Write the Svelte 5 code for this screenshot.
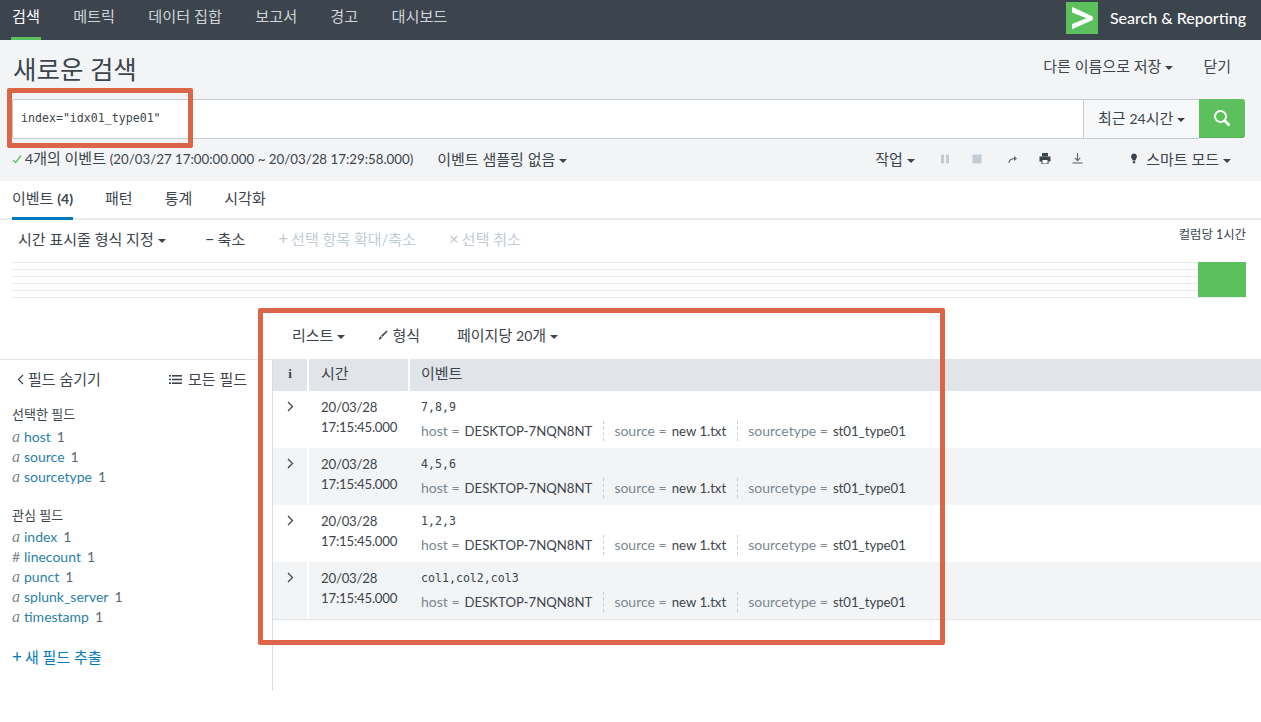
<script>
  const navItems = ['검색', '메트릭', '데이터 집합', '보고서', '경고', '대시보드'];
  const events = ['7,8,9', '4,5,6', '1,2,3', 'col1,col2,col3'];
  const selected = [['a', 'host'], ['a', 'source'], ['a', 'sourcetype']];
  const interesting = [['a', 'index'], ['#', 'linecount'], ['a', 'punct'], ['a', 'splunk_server'], ['a', 'timestamp']];
  const tabs = ['패턴', '통계', '시각화'];
</script>

<div class="page">
  <nav class="nav">
    {#each navItems as item, i}
      <span class="nav-item" class:active={i === 0}>{item}</span>
    {/each}
    <div class="brand">
      <span class="logo">
        <svg width="32" height="32" viewBox="0 0 32 32"><path d="M6 4.7 L26.7 14.5 V18 L6 27.3 V22 L20.5 16.2 L6 10.5 Z" fill="#fff"/></svg>
      </span>
      <span class="brand-text">Search &amp; Reporting</span>
    </div>
  </nav>

  <section class="head">
    <div class="title-row">
      <h1>새로운 검색</h1>
      <div class="title-actions">
        <span class="act">다른 이름으로 저장<i class="caret"></i></span>
        <span class="act close">닫기</span>
      </div>
    </div>
    <div class="search-row">
      <div class="search-input">index="idx01_type01"</div>
      <div class="time-btn">최근 <span class="lat">24</span>시간<i class="caret"></i></div>
      <div class="go-btn">
        <svg width="18" height="18" viewBox="0 0 18 18" fill="none" stroke="#fff"><circle cx="7.5" cy="7.5" r="5.5" stroke-width="2"/><path d="M11.5 11.5 L16.5 16.5" stroke-width="2.6"/></svg>
      </div>
    </div>
    <div class="status-row">
      <svg class="check" width="10" height="10" viewBox="0 0 10 10" fill="none" stroke="#5cc05c" stroke-width="1.3"><path d="M1 6 L3.6 8.6 L9 1.5"/></svg>
      <span class="count"><span class="lat">4</span>개의 이벤트 <span class="dates">(20/03/27 17:00:00.000 ~ 20/03/28 17:29:58.000)</span></span>
      <span class="sampling">이벤트 샘플링 없음<i class="caret"></i></span>
      <div class="job">
        <span class="job-menu">작업<i class="caret"></i></span>
        <span class="ico">
          <svg width="10" height="10" viewBox="0 0 10 10" fill="#c3cbd4"><rect x="1" y="0.5" width="3" height="9"/><rect x="6" y="0.5" width="3" height="9"/></svg>
        </span>
        <span class="ico">
          <svg width="10" height="10" viewBox="0 0 10 10" fill="#c3cbd4"><rect x="0.5" y="0.5" width="9" height="9"/></svg>
        </span>
        <span class="ico share">
          <svg width="10" height="10" viewBox="0 0 10 10" fill="none" stroke="#5c6773" stroke-width="1.1"><path d="M1 9 C1 5.5 3.5 4.5 8 4.5"/><path d="M6 2 L9 4.5 L6 7 Z" fill="#5c6773" stroke="none"/></svg>
        </span>
        <span class="ico">
          <svg width="12" height="11" viewBox="0 0 12 11" fill="#3c444d"><rect x="3" y="0" width="6" height="3.5"/><rect x="0.5" y="3.5" width="11" height="5"/><rect x="3" y="6.5" width="6" height="4.5" fill="#fff" stroke="#3c444d"/></svg>
        </span>
        <span class="ico">
          <svg width="11" height="11" viewBox="0 0 11 11" fill="none" stroke="#5c6773" stroke-width="1.1"><path d="M5.5 0 V7"/><path d="M2.8 4.8 L5.5 7.6 L8.2 4.8"/><path d="M0.5 10 H10.5"/></svg>
        </span>
        <span class="mode">
          <svg width="8" height="11" viewBox="0 0 8 11" fill="#3c444d"><path d="M4 0.5 A3.2 3.2 0 0 1 6 6 L5.4 7.6 H2.6 L2 6 A3.2 3.2 0 0 1 4 0.5 Z"/><rect x="2.8" y="8.2" width="2.4" height="2"/></svg>
          <span>스마트 모드<i class="caret"></i></span>
        </span>
      </div>
    </div>
  </section>

  <div class="tabs">
    <span class="tab active">이벤트 <b>(4)</b></span>
    {#each tabs as t}<span class="tab">{t}</span>{/each}
  </div>

  <div class="tl-bar">
    <span class="tl-format">시간 표시줄 형식 지정<i class="caret"></i></span>
    <span class="tl-out"><em>–</em>축소</span>
    <span class="tl-dim zoom"><em>+</em>선택 항목 확대/축소</span>
    <span class="tl-dim clear"><em>×</em>선택 취소</span>
    <span class="tl-scale">컬럼당 1시간</span>
  </div>
  <div class="timeline">
    <div class="tl-bar-green"></div>
  </div>

  <div class="res-bar">
    <span class="res-list">리스트<i class="caret"></i></span>
    <span class="res-format">
      <svg width="10" height="10" viewBox="0 0 10 10" fill="#3c444d"><path d="M8.6 0.6 L9.6 1.6 L4.2 7 L3 5.8 Z"/><path d="M2.6 6.2 L3.8 7.4 C3.4 9 2 9.7 0.4 9.6 C1.4 9 1.2 7 2.6 6.2 Z"/></svg>
      형식
    </span>
    <span class="res-page">페이지당 <span class="lat">20</span>개<i class="caret"></i></span>
  </div>

  <div class="main">
    <aside class="side">
      <div class="side-top">
        <span class="hide">
          <svg width="7" height="11" viewBox="0 0 7 11" fill="none" stroke="#3c444d" stroke-width="1.2"><path d="M6 1 L1.5 5.5 L6 10"/></svg>
          필드 숨기기
        </span>
        <span class="all">
          <svg width="13" height="9" viewBox="0 0 13 9" fill="#3c444d"><rect x="0" y="0" width="2" height="1.6"/><rect x="3" y="0" width="10" height="1.6"/><rect x="0" y="3.7" width="2" height="1.6"/><rect x="3" y="3.7" width="10" height="1.6"/><rect x="0" y="7.4" width="2" height="1.6"/><rect x="3" y="7.4" width="10" height="1.6"/></svg>
          모든 필드
        </span>
      </div>
      <h3 class="group first">선택한 필드</h3>
      {#each selected as f}
        <div class="field"><span class="ty">{f[0]}</span><span class="fname">{f[1]}</span><span class="fnum">1</span></div>
      {/each}
      <h3 class="group second">관심 필드</h3>
      {#each interesting as f}
        <div class="field"><span class="ty" class:hash={f[0] === '#'}>{f[0]}</span><span class="fname">{f[1]}</span><span class="fnum">1</span></div>
      {/each}
      <div class="extract"><em>+</em>새 필드 추출</div>
    </aside>

    <div class="results">
      <div class="thead">
        <div class="c-i"><b>i</b></div>
        <div class="c-time">시간</div>
        <div class="c-event">이벤트</div>
      </div>
      {#each events as ev, i}
        <div class="row" class:odd={i % 2 === 1}>
          <div class="c-i">
            <svg width="7" height="11" viewBox="0 0 7 11" fill="none" stroke="#3c444d" stroke-width="1.2"><path d="M1 1 L5.5 5.5 L1 10"/></svg>
          </div>
          <div class="c-time"><div>20/03/28</div><div>17:15:45.000</div></div>
          <div class="c-event">
            <div class="raw">{ev}</div>
            <div class="meta">
              <span class="mi"><span class="k">host =</span><span class="v">DESKTOP-7NQN8NT</span></span>
              <span class="mi"><span class="k">source =</span><span class="v">new 1.txt</span></span>
              <span class="mi"><span class="k">sourcetype =</span><span class="v">st01_type01</span></span>
            </div>
          </div>
        </div>
      {/each}
    </div>
  </div>

  <div class="note note-a"></div>
  <div class="note note-b"></div>
</div>

<style>
  :global(body) { margin: 0; background: #fff; }
  .page {
    position: relative;
    width: 1261px;
    height: 722px;
    overflow: hidden;
    font: 15px/20px Lato, "Noto Sans CJK KR", sans-serif;
    color: #3c444d;
    background: #fff;
  }
  .lat { font-size: 14px; }
  .caret {
    display: inline-block;
    width: 0; height: 0;
    margin-left: 4px;
    vertical-align: 2px;
    border-left: 4px solid transparent;
    border-right: 4px solid transparent;
    border-top: 4.5px solid #3c444d;
  }
  .nav {
    height: 40px;
    background: #3c444d;
    display: flex;
    align-items: flex-start;
    padding-left: 12px;
    box-sizing: border-box;
    color: #d0d4d9;
    font-size: 15.2px;
  }
  .nav-item { position: relative; height: 40px; line-height: 33px; margin-right: 33.2px; }
  .nav-item.active { color: #fff; }
  .nav-item.active::after {
    content: ''; position: absolute; left: -1px; right: -1px; bottom: 0; height: 3px; background: #5cc05c;
  }
  .brand { margin-left: auto; display: flex; align-items: center; height: 36px; padding-right: 15px; }
  .logo { display: block; width: 32px; height: 32px; background: #5cc05c; margin-right: 12px; }
  .logo svg { display: block; }
  .brand-text { color: #fff; font-size: 16px; font-weight: 500; }
  .head { background: #f2f4f5; height: 141px; box-sizing: border-box; }
  .title-row { height: 59px; display: flex; justify-content: space-between; padding: 0 30px 0 13px; }
  h1 { margin: 13px 0 0; font-size: 25.5px; line-height: 32px; font-weight: 400; color: #3c444d; }
  .title-actions { display: flex; padding-top: 16px; }
  .act.close { margin-left: 30px; }
  .search-row { display: flex; height: 40px; margin: 0 16px 0 12px; }
  .search-input {
    flex: 1;
    background: #fff;
    border: 1px solid #c3cbd4;
    border-right: 0;
    border-radius: 3px 0 0 3px;
    box-sizing: border-box;
    padding-left: 8px;
    font: 11.6px/36px "DejaVu Sans Mono", monospace;
  }
  .time-btn {
    width: 116px;
    box-sizing: border-box;
    background: #f7f8fa;
    border: 1px solid #c3cbd4;
    border-right: 0;
    line-height: 36px;
    padding-left: 14px;
  }
  .go-btn {
    width: 46px;
    height: 39px;
    background: #5cc05c;
    border-bottom: 1px solid #53ad53;
    box-sizing: border-box;
    border-radius: 0 3px 3px 0;
    display: flex; align-items: center; justify-content: center;
  }
  .status-row { display: flex; align-items: center; height: 40px; padding: 0 0 1px 12px; box-sizing: border-box; }
  .check { margin-right: 3px; }
  .dates { font-size: 13.3px; }
  .sampling { margin-left: 24px; }
  .job { margin-left: auto; display: flex; align-items: center; padding-right: 30px; }
  .job-menu { width: 54px; }
  .ico { width: 32px; display: flex; justify-content: center; }
  .share { margin-left: 4px; }
  .mode { margin-left: 37px; display: flex; align-items: center; gap: 8px; }
  .tabs {
    height: 39px; border-bottom: 2px solid #e8eaec; box-sizing: border-box; display: flex; padding-left: 12px;
  }
  .tab { position: relative; margin-right: 32px; line-height: 34px; }
  .tab b { font-weight: 700; font-size: 14px; }
  .tab.active::after {
    content: ''; position: absolute; left: 0; right: 0; bottom: -2px; height: 3px; background: #007abd;
  }
  .tl-bar { position: relative; display: flex; height: 42px; align-items: flex-start; padding: 9px 0 0 18px; box-sizing: border-box; }
  .tl-bar em, .extract em { font-style: normal; margin-right: 3px; font-size: 17px; }
  .tl-out { margin-left: 39px; }
  .tl-dim { color: #c3cbd4; }
  .zoom { margin-left: 33px; }
  .clear { margin-left: 33px; }
  .tl-scale { margin-left: auto; margin-right: 15px; font-size: 12.4px; line-height: 16px; margin-top: -2px; }
  .timeline {
    margin: 0 15px 0 12px;
    height: 36px;
    position: relative;
    background: repeating-linear-gradient(#e8eaec 0 1px, transparent 1px 7px);
  }
  .tl-bar-green { position: absolute; right: 0; top: 0; bottom: 1px; width: 48px; background: #5cc05c; }
  .res-bar { height: 61px; display: flex; padding: 27px 0 0 292px; box-sizing: border-box; }
  .res-format { margin-left: 33px; display: flex; align-items: center; gap: 4px; height: 20px; }
  .res-page { margin-left: 37px; }
  .main { display: flex; height: 332px; }
  .side { width: 273px; flex: none; box-sizing: border-box; border-top: 1px solid #e1e5e9; border-right: 1px solid #d9dee3; padding-left: 12px; }
  .side-top { display: flex; justify-content: space-between; padding: 9px 25px 0 5px; height: 20px; }
  .hide, .all { display: flex; align-items: center; gap: 4px; height: 20px; }
  .all { gap: 6px; }
  .group { margin: 0; font-size: 13px; font-weight: 400; line-height: 20px; }
  .first { margin-top: 15px; margin-bottom: 3px; }
  .second { margin-top: 18px; margin-bottom: 2px; }
  .field { height: 20px; display: flex; font-size: 14px; white-space: nowrap; }
  .ty { width: 12px; font: italic 16px/20px "Liberation Serif", serif; color: #7c8791; }
  .ty.hash { font: 14px/20px Lato, sans-serif; }
  .fname { color: #2c7fa8; margin-right: 6px; }
  .fnum { color: #5c6773; }
  .extract { margin-top: 20px; color: #007abd; }
  .results { flex: 1; min-width: 0; }
  .thead { display: flex; height: 32px; background: #e1e5e9; line-height: 28px; }
  .thead .c-i, .row .c-i { width: 34px; flex: none; box-sizing: border-box; display: flex; justify-content: center; }
  .c-i b { font: 700 13px/30px "Liberation Serif", serif; }
  .c-time { width: 101px; flex: none; box-sizing: border-box; border-left: 2px solid #fff; padding-left: 12px; }
  .c-event { flex: 1; box-sizing: border-box; border-left: 2px solid #fff; padding-left: 11px; }
  .row { display: flex; height: 57px; }
  .row:last-child { box-shadow: 0 1px 0 #e1e5e9; }
  .row .c-i { padding: 10px 0 0 1px; align-items: flex-start; }
  .row .c-time { padding-top: 6px; font-size: 13.2px; letter-spacing: -0.2px; }
  .row .c-event { border-left-color: transparent; padding-top: 6px; }
  .row.odd { background: #f2f4f5; }
  .raw { font: 11.6px/20px "DejaVu Sans Mono", monospace; }
  .meta { display: flex; margin-top: 4px; font-size: 14px; }
  .mi { display: flex; padding-right: 11px; margin-right: 10px; border-right: 1px dashed #c3cbd4; height: 20px; }
  .mi:last-child { border-right: 0; }
  .k { color: #7c8791; margin-right: 5px; }
  .v { font-size: 13.2px; }
  .note { position: absolute; border: 5px solid #dc6548; border-radius: 2px; box-sizing: border-box; }
  .note-a { left: 7px; top: 88px; width: 186px; height: 60px; }
  .note-b { left: 258px; top: 308px; width: 687px; height: 337px; }
</style>
